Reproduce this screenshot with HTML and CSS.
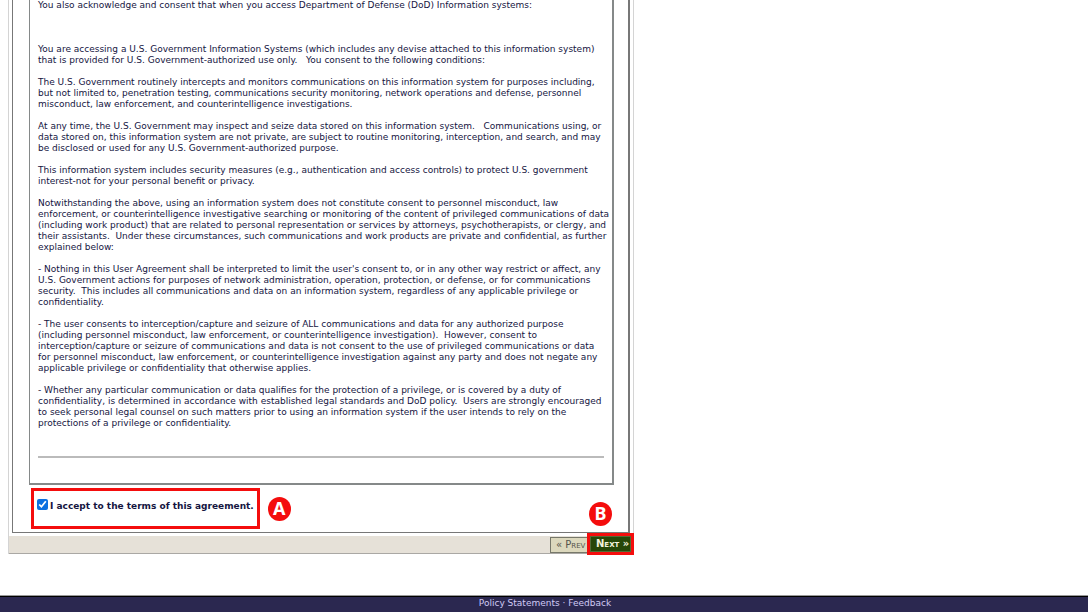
FILE: index.html
```html
<!DOCTYPE html>
<html lang="en">
<head>
  <meta charset="UTF-8">
  <title>User Agreement</title>
  <link rel="stylesheet" href="styles.css">
</head>
<body>

  <main class="wizard">
    <form class="panel">
      <div class="page">
        <div class="agreement">
          <p class="intro">You also acknowledge and consent that when you access Department of Defense (DoD) Information systems:</p>

          <p>You are accessing a U.S. Government Information Systems (which includes any devise attached to this information system)<br>
          that is provided for U.S. Government-authorized use only. &nbsp; You consent to the following conditions:</p>

          <p>The U.S. Government routinely intercepts and monitors communications on this information system for purposes including,<br>
          but not limited to, penetration testing, communications security monitoring, network operations and defense, personnel<br>
          misconduct, law enforcement, and counterintelligence investigations.</p>

          <p>At any time, the U.S. Government may inspect and seize data stored on this information system. &nbsp; Communications using, or<br>
          data stored on, this information system are not private, are subject to routine monitoring, interception, and search, and may<br>
          be disclosed or used for any U.S. Government-authorized purpose.</p>

          <p>This information system includes security measures (e.g., authentication and access controls) to protect U.S. government<br>
          interest-not for your personal benefit or privacy.</p>

          <p>Notwithstanding the above, using an information system does not constitute consent to personnel misconduct, law<br>
          enforcement, or counterintelligence investigative searching or monitoring of the content of privileged communications of data<br>
          (including work product) that are related to personal representation or services by attorneys, psychotherapists, or clergy, and<br>
          their assistants. &nbsp;Under these circumstances, such communications and work products are private and confidential, as further<br>
          explained below:</p>

          <p>- Nothing in this User Agreement shall be interpreted to limit the user's consent to, or in any other way restrict or affect, any<br>
          U.S. Government actions for purposes of network administration, operation, protection, or defense, or for communications<br>
          security. &nbsp;This includes all communications and data on an information system, regardless of any applicable privilege or<br>
          confidentiality.</p>

          <p>- The user consents to interception/capture and seizure of ALL communications and data for any authorized purpose<br>
          (including personnel misconduct, law enforcement, or counterintelligence investigation). &nbsp;However, consent to<br>
          interception/capture or seizure of communications and data is not consent to the use of privileged communications or data<br>
          for personnel misconduct, law enforcement, or counterintelligence investigation against any party and does not negate any<br>
          applicable privilege or confidentiality that otherwise applies.</p>

          <p>- Whether any particular communication or data qualifies for the protection of a privilege, or is covered by a duty of<br>
          confidentiality, is determined in accordance with established legal standards and DoD policy. &nbsp;Users are strongly encouraged<br>
          to seek personal legal counsel on such matters prior to using an information system if the user intends to rely on the<br>
          protections of a privilege or confidentiality.</p>

          <hr>
        </div>

        <div class="accept-row">
          <div class="accept">
            <input type="checkbox" id="accept" checked>
            <label for="accept">I accept to the terms of this agreement.</label>
          </div>
          <span class="marker">A</span>
        </div>
      </div>

      <div class="toolbar">
        <button type="button" class="prev">« Prev</button>
        <div class="next-wrap">
          <button type="button" class="next">Next »</button>
          <span class="marker marker-next">B</span>
        </div>
      </div>
    </form>
  </main>

  <footer>
    <a href="#">Policy Statements</a> · <a href="#">Feedback</a>
  </footer>

</body>
</html>
```
FILE: styles.css
```css
* {
  box-sizing: border-box;
}

body {
  margin: 0;
  min-height: 100vh;
  display: flex;
  flex-direction: column;
  background: #fff;
  color: #15153f;
  font-family: "DejaVu Sans", Verdana, sans-serif;
  font-size: 9px;
  line-height: 11px;
}

.wizard {
  flex: 1;
  padding: 0 8px;
}

.panel {
  max-width: 626px;
  border-left: 1px solid #d4d4d4;
  border-right: 1px solid #d4d4d4;
}

.page {
  margin: 0 3px;
  padding: 0 14px 3px 16px;
  border: solid #777;
  border-width: 0 2px 1px 1px;
}

.agreement {
  padding: 0 8px 25px;
  border: solid #858989;
  border-width: 0 2px 2px;
  border-left-width: 1px;
  white-space: nowrap;
}

.agreement p {
  margin: 0 0 11px;
}

.agreement .intro {
  margin-bottom: 33px;
}

.agreement hr {
  margin: 27px 0 0;
  border: 0;
  border-top: 2px solid #bbb;
}

.accept-row {
  display: flex;
  align-items: center;
  gap: 8px;
  margin: 3px 0 0 2px;
}

.accept {
  display: flex;
  align-items: flex-start;
  gap: 2px;
  height: 41px;
  padding: 8px 3px 0;
  border: 3px solid #f40d0d;
  font-weight: bold;
  white-space: nowrap;
}

.accept input {
  width: 11px;
  height: 11px;
  margin: 0;
  accent-color: #0b70e0;
}

.accept label {
  padding-top: 2px;
}

.marker {
  width: 23px;
  height: 24px;
  border-radius: 50%;
  background: #f40d0d;
  color: #fff;
  font: bold 18px/22px "Noto Sans", sans-serif;
  text-align: center;
}

.toolbar {
  display: flex;
  justify-content: flex-end;
  height: 18px;
  margin-top: 3px;
  border-bottom: 1px solid #aaa8a4;
  background: #e6e1d8;
}

.toolbar button {
  height: 16px;
  padding: 0 5px;
  font-family: inherit;
  font-size: 10px;
  line-height: 14px;
  font-variant: small-caps;
  white-space: nowrap;
}

.prev {
  width: 40px;
  margin-top: 1px;
  border: 1px solid #77786a;
  border-right: 0;
  background: #dcd8bd;
  color: #55554c;
}

.next-wrap {
  position: relative;
  height: 22px;
  margin: -3px -1px 0 -3px;
  border: 3px solid #f40d0d;
}

.next {
  display: block;
  width: 41px;
  border: 1px solid #526b34;
  background: #264708;
  color: #f2f2dc;
  font-weight: bold;
}

/* sits above the Next button */
.marker-next {
  position: absolute;
  bottom: 26px;
  left: -1px;
}

footer {
  height: 17px;
  padding: 1px 0 0 2px;
  border-top: 1px solid #999;
  background: #2b2850;
  box-shadow: inset 0 1px #000;
  color: #d0caf4;
  text-align: center;
  line-height: 13px;
}

footer a {
  color: inherit;
  text-decoration: none;
}
```
